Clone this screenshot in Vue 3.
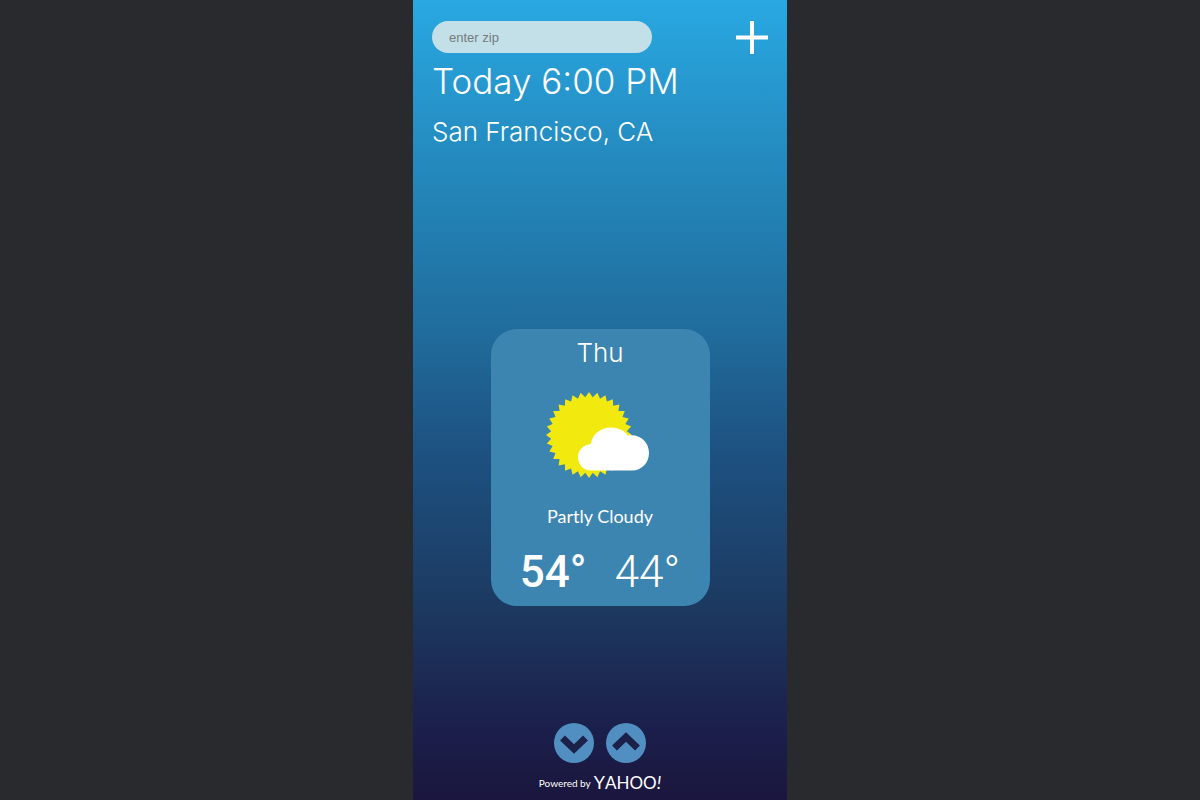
<script setup>
import { ref } from 'vue'

const zip = ref('')

const TEETH = 32
const sunPoints = Array.from({ length: TEETH * 2 }, (_, i) => {
  const radius = i % 2 === 0 ? 43 : 38
  const angle = (i * Math.PI) / TEETH - Math.PI / 2
  return `${(43 + radius * Math.cos(angle)).toFixed(2)},${(43 + radius * Math.sin(angle)).toFixed(2)}`
}).join(' ')
</script>

<template>
  <main class="phone">
    <header class="top">
      <form class="search" @submit.prevent>
        <input v-model="zip" class="zip" type="text" placeholder="enter zip" aria-label="Zip code" />
        <button class="add" type="submit" aria-label="Add location">
          <svg viewBox="0 0 32 34" width="32" height="34" aria-hidden="true">
            <path d="M16 1V34M0 17.5H32" fill="none" stroke="#fff" stroke-width="4" />
          </svg>
        </button>
      </form>
      <h1 class="time">Today 6:00 PM</h1>
      <h2 class="city">San Francisco, CA</h2>
    </header>

    <section class="card">
      <h3 class="day">Thu</h3>
      <svg class="weather" viewBox="0 0 108 86" width="108" height="86" aria-hidden="true">
        <polygon :points="sunPoints" fill="#f2e90e" />
        <path
          d="M45 78.500C37.500 78.500 32 72.500 32 65.500C32 58 37.500 52.500 45 52C46 42.500 54.500 35.500 65 35.500C72 35.500 78.500 38.500 82 43.500C94 41.500 103 50 103 61C103 71 95.500 78.500 86 78.500Z"
          fill="#fff"
        />
      </svg>
      <p class="condition">Partly Cloudy</p>
      <p class="temps">
        <strong class="high">54°</strong>
        <span class="low">44°</span>
      </p>
    </section>

    <footer class="bottom">
      <nav class="pager" aria-label="Days">
        <button class="round" type="button" aria-label="Next day">
          <svg viewBox="0 0 40 40" width="40" height="40" aria-hidden="true">
            <path d="M8.500 15L20 26L31.500 15" fill="none" stroke="#1b2149" stroke-width="7" />
          </svg>
        </button>
        <button class="round" type="button" aria-label="Previous day">
          <svg viewBox="0 0 40 40" width="40" height="40" aria-hidden="true">
            <path d="M8.500 25L20 14L31.500 25" fill="none" stroke="#1b2149" stroke-width="7" />
          </svg>
        </button>
      </nav>
      <a class="credit" href="#">
        <span>Powered by</span>
        <span class="yahoo"><span class="cap">Y</span>AHOO<i class="bang">!</i></span>
      </a>
    </footer>
  </main>
</template>

<style>
body {
  margin: 0;
  background: #292a2e;
}
</style>

<style scoped>
.phone {
  box-sizing: border-box;
  display: flex;
  flex-direction: column;
  justify-content: space-between;
  align-items: center;
  width: 100%;
  max-width: 374px;
  min-height: 100vh;
  margin: 0 auto;
  padding: 20px 19px 8px;
  background: linear-gradient(#29a8e2 0%, #248abe 20%, #206d9d 41%, #1d5282 56%, #1c3960 76%, #1b1f4b 91%, #1a163e 100%);
  color: #fff;
  font-family: Lato, "Open Sans", sans-serif;
}

.top {
  width: 100%;
}

.search {
  display: flex;
  justify-content: space-between;
  align-items: center;
}

.zip {
  box-sizing: border-box;
  width: 220px;
  height: 32px;
  padding: 0 17px;
  border: 0;
  border-radius: 16px;
  background: #c3dfe7;
  color: #555;
  font: 13px "Liberation Sans", Arial, sans-serif;
}

.zip::placeholder {
  color: #757b80;
  opacity: 1;
}

.add,
.round {
  display: flex;
  padding: 0;
  border: 0;
  background: none;
  cursor: pointer;
}

.time {
  margin: 4px 0 0;
  font-family: Inter, Lato, sans-serif;
  font-size: 35px;
  font-weight: 300;
  line-height: 46px;
  white-space: nowrap;
}

.city {
  margin: 10px 0 0;
  font-family: Inter, Lato, sans-serif;
  font-size: 26px;
  font-weight: 300;
  line-height: 36px;
}

.card {
  display: flex;
  flex-direction: column;
  align-items: center;
  box-sizing: border-box;
  width: 219px;
  margin-top: 62px;
  padding: 6px 0 8px;
  border-radius: 26px;
  background: #3c85b1;
}

.day {
  margin: 0;
  font-family: Inter, Lato, sans-serif;
  font-size: 26px;
  font-weight: 300;
  line-height: 36px;
}

.weather {
  margin-top: 21px;
}

.condition {
  margin: 26px 0 0;
  font-size: 18px;
  line-height: 24px;
}

.temps {
  display: flex;
  gap: 28px;
  margin: 18px 0 0;
  font-family: Roboto, Lato, sans-serif;
  font-size: 44px;
  line-height: 52px;
}

.high {
  font-weight: 500;
}

.low {
  font-weight: 300;
}

.bottom {
  display: flex;
  flex-direction: column;
  align-items: center;
  gap: 10px;
}

.pager {
  display: flex;
  gap: 12px;
}

.round {
  border-radius: 50%;
  background: #518fc3;
}

.credit {
  display: flex;
  align-items: center;
  gap: 3px;
  color: #fff;
  font-size: 10px;
  line-height: 18px;
  text-decoration: none;
}

.yahoo {
  font-size: 17px;
}

.cap {
  font-size: 18px;
}

.bang {
  font-size: 18px;
}
</style>
